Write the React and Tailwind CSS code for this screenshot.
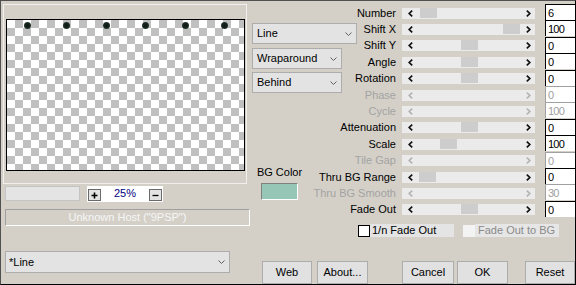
import React from "react";

const rows = [
  { label: "Number", value: "6", thumb: 2 },
  { label: "Shift X", value: "100", thumb: 85 },
  { label: "Shift Y", value: "0", thumb: 43 },
  { label: "Angle", value: "0", thumb: 43 },
  { label: "Rotation", value: "0", thumb: 43 },
  { label: "Phase", value: "0", disabled: true },
  { label: "Cycle", value: "100", disabled: true },
  { label: "Attenuation", value: "0", thumb: 43 },
  { label: "Scale", value: "100", thumb: 22 },
  { label: "Tile Gap", value: "0", disabled: true },
  { label: "Thru BG Range", value: "0", thumb: 1 },
  { label: "Thru BG Smooth", value: "30", disabled: true },
  { label: "Fade Out", value: "0", thumb: 43 },
];

function DownChevron() {
  return (
    <svg width="7" height="4" viewBox="0 0 7 4" className="shrink-0">
      <polyline points="0.5,0.5 3.5,3.5 6.5,0.5" fill="none" stroke="#606060" strokeWidth="1" />
    </svg>
  );
}

function Dropdown({ text, className }) {
  return (
    <div className={"flex h-[21px] shrink-0 items-center justify-between border border-[#adadad] bg-[#e3e3e3] pr-[4px] " + className}>
      <span className="whitespace-nowrap">{text}</span>
      <DownChevron />
    </div>
  );
}

function Arrow({ dir, disabled }) {
  const pts = dir === "left" ? "4.2,0.6 1.2,3.5 4.2,6.4" : "0.8,0.6 3.8,3.5 0.8,6.4";
  return (
    <svg width="5" height="7" viewBox="0 0 5 7">
      <polyline points={pts} fill="none" stroke={disabled ? "#b4b4b4" : "#111111"} strokeWidth="1.7" />
    </svg>
  );
}

function ParamRow({ r }) {
  return (
    <div className="flex h-[16.4px] items-center">
      <div className={"w-[89px] whitespace-nowrap text-right " + (r.disabled ? "text-[#a3a3a3]" : "text-black")}>{r.label}</div>
      <div className="ml-[6px] flex h-[11px] w-[133px] bg-[#ebebeb]">
        <div className="flex w-[16px] items-center justify-center">
          <Arrow dir="left" disabled={r.disabled} />
        </div>
        <div className="flex-1">
          {!r.disabled && <div className="h-[10px] w-[17px] bg-[#cdcdcd]" style={{ marginLeft: r.thumb }} />}
        </div>
        <div className="flex w-[15px] items-center justify-center pl-[2px]">
          <Arrow dir="right" disabled={r.disabled} />
        </div>
      </div>
      <div
        className={
          "-mt-[1px] ml-[10px] h-[16px] w-[30px] self-start border-l border-t bg-white pl-[2px] pt-[1px] leading-[14px] tracking-[-0.8px] " +
          (r.disabled ? "border-[#a0a0a0] text-[#a0a0a0]" : "border-black text-black")
        }
      >
        {r.value}
      </div>
    </div>
  );
}

function Btn({ children, className }) {
  return (
    <div className={"flex h-[23px] shrink-0 items-center justify-center border border-[#adadad] bg-[#e1e1e1] pb-[1px] " + className}>
      {children}
    </div>
  );
}

export default function App() {
  const dots = [0, 1, 2, 3, 4, 5];
  return (
    <div className="flex h-[285px] w-[576px] overflow-hidden border border-[#505050] border-b-black border-r-black bg-[#d4d0c8] font-['Liberation_Sans',Arial,sans-serif] text-[11px] leading-[13px] text-black">
      {/* Left column */}
      <div className="flex w-[250px] shrink-0 flex-col">
        <div className="ml-[2px] mt-[3px] h-[180px] w-[244px] border border-[#f1f0ec]">
          <div className="ml-[2px] mt-[14px] h-[152px] w-[239px] border border-black bg-[image:repeating-conic-gradient(#c0c0c0_0_25%,#ffffff_0_50%)] bg-[length:16px_16px]">
            <div className="flex gap-[32.5px] pl-[16.5px] pt-[1.5px]">
              {dots.map((d) => (
                <div
                  key={d}
                  className="h-[7px] w-[7px] rounded-full bg-[radial-gradient(circle,#0c1814_0,#18281f_55%,#5d6e68_100%)]"
                />
              ))}
            </div>
          </div>
        </div>

        <div className="mt-[2px] flex h-[16px]">
          <div className="ml-[4px] h-[15px] w-[75px] border border-[#c4c4c4] bg-[#e4e4e4]" />
          <div className="ml-[7px] flex h-[16px] w-[76px] items-end justify-between bg-white px-[1px] pb-[1px]">
            <div className="flex h-[12px] w-[13px] items-center justify-center border border-[#6a6a6a] bg-[#e3e3e3]">
              <svg width="7" height="7" viewBox="0 0 7 7">
                <path d="M3.5 0.5V6.5M0.5 3.5H6.5" stroke="#000" strokeWidth="1.6" />
              </svg>
            </div>
            <span className="mb-[1px] text-[#000080]">25%</span>
            <div className="flex h-[12px] w-[13px] items-center justify-center border border-[#6a6a6a] bg-[#e3e3e3]">
              <svg width="7" height="7" viewBox="0 0 7 7">
                <path d="M0.5 3.5H6.5" stroke="#000" strokeWidth="1.3" />
              </svg>
            </div>
          </div>
        </div>

        <div className="ml-[4px] mt-[7px] flex h-[17px] w-[245px] items-center justify-center border border-[#a0a0a0] border-b-white border-r-white text-[#f6f6f6]">
          Unknown Host ("9PSP")
        </div>

        <Dropdown text="*Line" className="ml-[4px] mt-[25px] h-[22px] w-[225px] pl-[3px]" />
      </div>

      {/* Right area */}
      <div className="flex flex-1 flex-col">
        <div className="flex h-[224px]">
          <div className="ml-[1px] flex w-[55px] shrink-0 flex-col items-start">
            <Dropdown text="Line" className="mt-[22px] w-[105px] pl-[4px]" />
            <Dropdown text="Wraparound" className="mt-[4px] w-[90px] pl-[4px]" />
            <Dropdown text="Behind" className="mt-[3px] w-[90px] pl-[4px]" />
            <div className="mt-[73px] self-center whitespace-nowrap">BG Color</div>
            <div className="mt-[4px] h-[17px] w-[37px] self-center border border-[#808080] border-b-white border-r-white bg-[#96c7b6]" />
          </div>
          <div className="flex flex-col pt-[4px]">
            {rows.map((r) => (
              <ParamRow key={r.label} r={r} />
            ))}
          </div>
        </div>

        <div className="flex h-[13px] items-end">
          <div className="ml-[107px] h-[12px] w-[12px] border border-black bg-white" />
          <div className="flex h-[13px] w-[84px] items-center bg-[#e4e4e4] pl-[2px]">1/n Fade Out</div>
          <div className="ml-[9px] h-[12px] w-[12px] bg-[#f3f3f3]" />
          <div className="flex h-[13px] w-[84px] items-center bg-[#e6e6e6] pl-[3px] text-[#8a8a8a]">Fade Out to BG</div>
        </div>

        <div className="mt-[24px] flex">
          <Btn className="ml-[11px] w-[50px]">Web</Btn>
          <Btn className="ml-[5px] w-[51px]">About...</Btn>
          <Btn className="ml-[34px] w-[52px]">Cancel</Btn>
          <Btn className="ml-[3px] w-[51px]">OK</Btn>
          <Btn className="ml-[17px] w-[50px]">Reset</Btn>
        </div>
      </div>
    </div>
  );
}
